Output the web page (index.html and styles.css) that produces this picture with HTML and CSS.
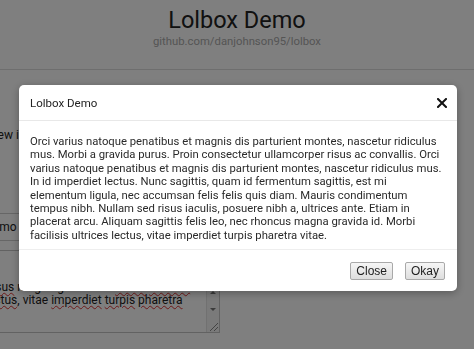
FILE: index.html
```html
<!DOCTYPE html>
<html lang="en">
<head>
    <meta charset="UTF-8">
    <meta name="viewport" content="width=device-width, initial-scale=1.0">
    <title>Lolbox Demo</title>
    <link rel="stylesheet" href="styles.css">
</head>
<body>
    <header class="page-header">
        <h1>Lolbox Demo</h1>
        <p class="repo">github.com/danjohnson95/lolbox</p>
    </header>

    <main class="demo-form">
        <p class="hint">Preview in a lolbox</p>
        <div class="field">
            <input class="text-input" type="text" value="Demo">
        </div>
        <div class="textarea">
            <div class="textarea-text">
                <span class="sp">Risus</span> magna gravida id. <span class="sp">Morbi</span> <span class="sp">facilisis</span><br>
                <span class="sp">lectus</span>, vitae <span class="sp">imperdiet</span> <span class="sp">turpis</span> <span class="sp">pharetra</span>
            </div>
            <div class="scrollbar">
                <span class="arrow up"></span>
                <span class="arrow down"></span>
                <span class="grip"></span>
            </div>
        </div>
    </main>

    <div class="overlay">
        <div class="lolbox">
            <div class="lolbox-header">
                <span class="lolbox-title">Lolbox Demo</span>
                <button class="lolbox-close" aria-label="Close">
                    <svg width="10" height="10" viewBox="0 0 10 10">
                        <path d="M1 1 L9 9 M9 1 L1 9" stroke="#111" stroke-width="2" stroke-linecap="square"/>
                    </svg>
                </button>
            </div>
            <p class="lolbox-body">
                Orci varius natoque penatibus et magnis dis parturient montes, nascetur ridiculus<br>
                mus. Morbi a gravida purus. Proin consectetur ullamcorper risus ac convallis. Orci<br>
                varius natoque penatibus et magnis dis parturient montes, nascetur ridiculus mus.<br>
                In id imperdiet lectus. Nunc sagittis, quam id fermentum sagittis, est mi<br>
                elementum ligula, nec accumsan felis felis quis diam. Mauris condimentum<br>
                tempus nibh. Nullam sed risus iaculis, posuere nibh a, ultrices ante. Etiam in<br>
                placerat arcu. Aliquam sagittis felis leo, nec rhoncus magna gravida id. Morbi<br>
                facilisis ultrices lectus, vitae imperdiet turpis pharetra vitae.
            </p>
            <div class="lolbox-footer">
                <button class="btn">Close</button>
                <button class="btn">Okay</button>
            </div>
        </div>
    </div>
</body>
</html>
```

FILE: styles.css
```css
* {
    margin: 0;
    padding: 0;
    box-sizing: border-box;
}

body {
    width: 474px;
    height: 349px;
    overflow: hidden;
    background: #fff;
    font-family: Roboto, "Noto Sans", sans-serif;
    color: #222;
}

.page-header {
    height: 70px;
    padding-top: 5px;
    text-align: center;
    border-bottom: 1px solid #dcdcdc;
}

.page-header h1 {
    font-size: 23.5px;
    font-weight: 400;
    line-height: 30px;
}

.repo {
    font-size: 11.3px;
    color: #aaa;
    line-height: 13px;
}

.demo-form {
    width: 249px;
    margin-left: -29px;
}

.hint {
    margin-top: 57px;
    font-size: 12px;
    line-height: 16px;
    white-space: nowrap;
}

.field {
    margin-top: 70px;
    height: 28px;
    border-top: 1px solid #ccc;
    border-bottom: 1px solid #ccc;
}

.text-input {
    width: 100%;
    height: 26px;
    padding-left: 14px;
    border: none;
    background: transparent;
    font-family: Roboto, sans-serif;
    font-size: 12px;
    color: #222;
}

.textarea {
    display: flex;
    height: 83px;
    margin-top: 9px;
    border: 1px solid #c4c4c4;
}

.textarea-text {
    flex: 1;
    padding: 30px 0 0 13px;
    font-size: 12px;
    line-height: 13px;
    white-space: nowrap;
    overflow: hidden;
}

.sp {
    text-decoration: underline wavy #d33;
    text-decoration-thickness: 1px;
}

.scrollbar {
    width: 13px;
    position: relative;
    border-left: 1px solid #e2e2e2;
    background: #f4f4f4;
}

.arrow {
    position: absolute;
    left: 3px;
    width: 0;
    height: 0;
    border-left: 3px solid transparent;
    border-right: 3px solid transparent;
}

.arrow.up {
    top: 40px;
    border-bottom: 3px solid #777;
}

.arrow.down {
    top: 57px;
    border-top: 3px solid #777;
}

.grip {
    position: absolute;
    right: 1px;
    bottom: 1px;
    width: 8px;
    height: 8px;
    background: linear-gradient(135deg, transparent 45%, #888 45%, #888 55%, transparent 55%, transparent 70%, #888 70%, #888 80%, transparent 80%);
}

.overlay {
    position: fixed;
    top: 0;
    left: 0;
    right: 0;
    bottom: 0;
    background: rgba(0, 0, 0, 0.5);
    display: flex;
    justify-content: center;
    align-items: flex-start;
    padding-top: 85px;
}

.lolbox {
    width: 438px;
    margin-left: 2px;
    background: #fff;
    border-radius: 5px;
    box-shadow: 0 2px 8px rgba(0, 0, 0, 0.3);
}

.lolbox-header {
    display: flex;
    align-items: center;
    justify-content: space-between;
    height: 36px;
    padding: 0 10px 0 11px;
    border-bottom: 1px solid #e8e8e8;
}

.lolbox-title {
    font-size: 11.5px;
    color: #222;
}

.lolbox-close {
    display: flex;
    border: none;
    background: none;
    cursor: pointer;
}

.lolbox-body {
    padding: 14px 11px 7px 11px;
    font-size: 11.3px;
    line-height: 13.4px;
    color: #2a2a2a;
    white-space: nowrap;
    border-bottom: 1px solid #eee;
}

.lolbox-footer {
    display: flex;
    justify-content: flex-end;
    gap: 12px;
    padding: 12px 12px 11px;
}

.btn {
    height: 18px;
    padding: 0 5px;
    font-family: "Liberation Sans", Arial, sans-serif;
    font-size: 12px;
    color: #222;
    background: linear-gradient(#f6f6f6, #dedede);
    border: 1px solid #a9a9a9;
    border-radius: 2px;
    cursor: pointer;
}
```
